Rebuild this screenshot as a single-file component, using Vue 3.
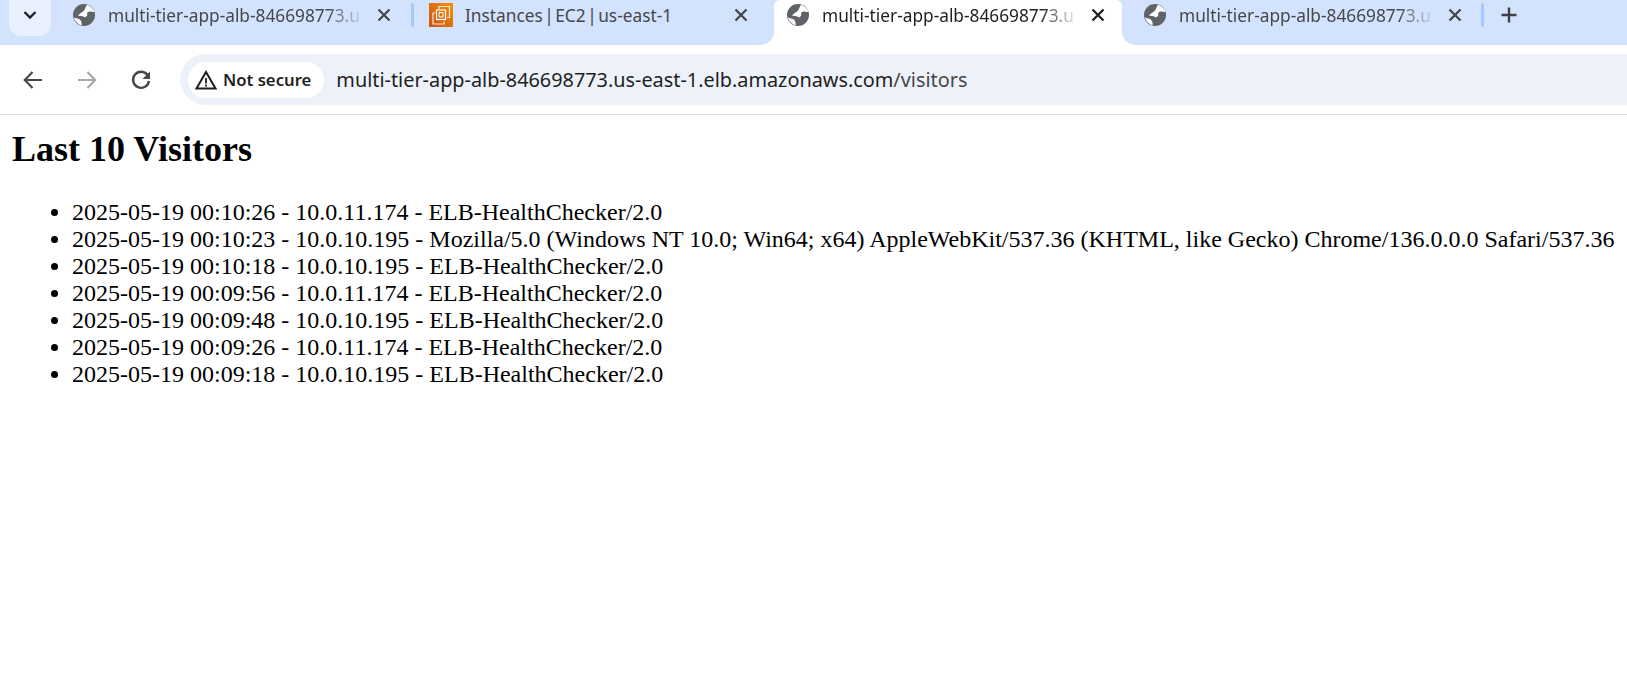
<template>
  <div class="browser">
    <div class="tabstrip">
      <button class="tab-search">
        <svg width="16" height="16" viewBox="0 0 16 16"><path d="M2.500 5 8 10.500 13.500 5" fill="none" stroke="#1f2024" stroke-width="2.400"/></svg>
      </button>
      <div
        v-for="tab in tabs"
        :key="tab.id"
        class="tab"
        :class="{ active: tab.active, divided: tab.divided }"
      >
        <svg v-if="tab.kind === 'ec2'" class="favicon" width="24" height="24" viewBox="0 0 24 24">
          <defs>
            <linearGradient id="ec2-grad" x1="0" y1="1" x2="1" y2="0">
              <stop offset="0" stop-color="#c8511b" />
              <stop offset="1" stop-color="#f59000" />
            </linearGradient>
          </defs>
          <rect width="24" height="24" fill="url(#ec2-grad)" />
          <g fill="none" stroke="#fff" stroke-width="1.200">
            <path d="M10 6V3.500h10.500v11H18" opacity=".85" />
            <path d="M6.500 10H4v11h11v-2.500" opacity=".85" />
            <rect x="7.500" y="7" width="9" height="9.500" />
            <path d="M10 9.500h4v4.500h-4z" stroke-width="1" />
          </g>
        </svg>
        <svg v-else class="favicon" width="24" height="24" viewBox="0 0 24 24">
          <circle cx="12" cy="12" r="11" fill="#5f6368" />
          <path d="M15 1.800C13.200 4.500 13 7 11 8.500 9 10 7 10.500 6 13c3-.5 5 .5 7 1.500 2-1.500 3-2.500 2-4.500 1-2 4-2 7.500-.8C21.500 6 19 3 15 1.800z" fill="#fff" />
          <path d="M1.800 14.500C3 18.500 6 21.300 9.500 22.400 10 19.500 9 17 7 16z" fill="#fff" />
        </svg>
        <span class="tab-title" :class="{ fade: tab.fade }">{{ tab.title }}</span>
        <svg class="tab-close" width="16" height="16" viewBox="0 0 16 16">
          <path d="M2.500 2.500l11 11M13.500 2.500l-11 11" stroke-width="2.300" fill="none" />
        </svg>
      </div>
      <div class="tab-divider"></div>
      <button class="new-tab">
        <svg width="18" height="18" viewBox="0 0 18 18"><path d="M9 1.500v15M1.500 9h15" stroke="#3d3f43" stroke-width="2.400" fill="none" /></svg>
      </button>
    </div>

    <div class="toolbar">
      <button class="nav-btn">
        <svg width="24" height="24" viewBox="0 0 24 24"><path d="M21 12H4M11.500 4 3.800 12l7.700 8" fill="none" stroke="#474747" stroke-width="2.200" /></svg>
      </button>
      <button class="nav-btn">
        <svg width="24" height="24" viewBox="0 0 24 24"><path d="M3 12h17M12.500 4l7.700 8-7.700 8" fill="none" stroke="#a9a9a9" stroke-width="2.200" /></svg>
      </button>
      <button class="nav-btn">
        <svg width="24" height="24" viewBox="0 0 24 24"><path d="M18.500 7a8 8 0 1 0 1.500 6" fill="none" stroke="#474747" stroke-width="2.400" /><path d="M21 3.500v7.500h-7.500z" fill="#474747" /></svg>
      </button>
      <div class="omnibox">
        <div class="security-chip">
          <svg width="22" height="20" viewBox="0 0 22 20"><path d="M11 2 1.500 18.500h19z" fill="none" stroke="#1f1f1f" stroke-width="2" stroke-linejoin="miter" /><path d="M11 8v5.500M11 14.500v2" stroke="#1f1f1f" stroke-width="1.800" /></svg>
          <span>Not secure</span>
        </div>
        <div class="url">multi-tier-app-alb-846698773.us-east-1.elb.amazonaws.com<span class="url-path">/visitors</span></div>
      </div>
    </div>

    <main class="page">
      <h1>Last 10 Visitors</h1>
      <ul>
        <li v-for="visitor in visitors" :key="visitor">{{ visitor }}</li>
      </ul>
    </main>
  </div>
</template>

<script setup>
// titles are cut where the tab strip cuts them
const albTitle = 'multi-tier-app-alb-846698773.u';

const tabs = [
  { id: 1, kind: 'globe', title: albTitle, fade: true },
  { id: 2, kind: 'ec2', title: 'Instances | EC2 | us-east-1', divided: true },
  { id: 3, kind: 'globe', title: albTitle, fade: true, active: true },
  { id: 4, kind: 'globe', title: albTitle, fade: true },
];

const visitors = [
  '2025-05-19 00:10:26 - 10.0.11.174 - ELB-HealthChecker/2.0',
  '2025-05-19 00:10:23 - 10.0.10.195 - Mozilla/5.0 (Windows NT 10.0; Win64; x64) AppleWebKit/537.36 (KHTML, like Gecko) Chrome/136.0.0.0 Safari/537.36',
  '2025-05-19 00:10:18 - 10.0.10.195 - ELB-HealthChecker/2.0',
  '2025-05-19 00:09:56 - 10.0.11.174 - ELB-HealthChecker/2.0',
  '2025-05-19 00:09:48 - 10.0.10.195 - ELB-HealthChecker/2.0',
  '2025-05-19 00:09:26 - 10.0.11.174 - ELB-HealthChecker/2.0',
  '2025-05-19 00:09:18 - 10.0.10.195 - ELB-HealthChecker/2.0',
];
</script>

<style>
html,
body {
  overflow: hidden;
  background: #fff;
}
</style>

<style scoped>
.browser {
  width: 1627px;
  height: 685px;
  overflow: hidden;
  background: #fff;
}

button {
  border: none;
  background: none;
  padding: 0;
  display: flex;
  align-items: center;
  justify-content: center;
}

.tabstrip {
  height: 45px;
  background: #d3e3fd;
  display: flex;
  align-items: flex-start;
  font-family: "Noto Sans", sans-serif;
}

.tab-search {
  width: 42px;
  height: 36px;
  padding-bottom: 7px;
  box-sizing: border-box;
  margin-left: 9px;
  background: #e9f0fe;
  border-radius: 0 0 12px 12px;
  flex-shrink: 0;
}

.tab {
  width: 357px;
  height: 45px;
  padding-left: 21px;
  box-sizing: border-box;
  flex-shrink: 0;
  display: flex;
  align-items: flex-start;
  position: relative;
  color: #45474b;
}

.tab.divided::before {
  content: "";
  position: absolute;
  left: 3px;
  top: 3px;
  width: 3px;
  height: 24px;
  border-radius: 2px;
  background: #a8c7fa;
}

.tab.active {
  width: 348px;
  margin-left: 9px;
  padding-left: 12px;
  background: #fff;
  color: #1f1f1f;
  border-radius: 6px 6px 0 0;
}

/* flares that join the active tab to the toolbar */
.tab.active::before,
.tab.active::after {
  content: "";
  position: absolute;
  bottom: 0;
  width: 13px;
  height: 13px;
}

.tab.active::before {
  left: -13px;
  background: radial-gradient(circle at 0 0, #d3e3fd 12.500px, #fff 13px);
}

.tab.active::after {
  right: -13px;
  background: radial-gradient(circle at 100% 0, #d3e3fd 12.500px, #fff 13px);
}

.favicon {
  margin-top: 3px;
  flex-shrink: 0;
}

.tab-title {
  margin-left: 12px;
  width: 251px;
  flex-shrink: 0;
  font-size: 17.300px;
  word-spacing: -3px;
  line-height: 32px;
  white-space: nowrap;
}

.tab-title.fade {
  -webkit-mask-image: linear-gradient(to right, #000 87%, rgba(0, 0, 0, 0.15) 100%);
  mask-image: linear-gradient(to right, #000 87%, rgba(0, 0, 0, 0.15) 100%);
}

.tab-close {
  margin-left: 17px;
  margin-top: 7px;
  flex-shrink: 0;
  stroke: #45474b;
}

.tab.active .tab-close {
  stroke: #1f1f1f;
}

.tab-divider {
  width: 3px;
  height: 24px;
  margin-top: 3px;
  margin-left: 2px;
  border-radius: 2px;
  background: #a8c7fa;
  flex-shrink: 0;
}

.new-tab {
  width: 18px;
  height: 18px;
  margin-left: 16px;
  margin-top: 6px;
}

.toolbar {
  height: 70px;
  background: #fff;
  border-top-left-radius: 10px;
  border-bottom: 1px solid #dcdcdc;
  box-sizing: border-box;
  display: flex;
  align-items: center;
  padding-left: 21px;
  font-family: "Noto Sans", sans-serif;
}

.nav-btn {
  width: 24px;
  height: 24px;
  margin-right: 30px;
  flex-shrink: 0;
}

.omnibox {
  flex: 1;
  height: 51px;
  background: #edf2fa;
  border-radius: 26px 0 0 26px;
  display: flex;
  align-items: center;
  padding-left: 8px;
  margin-left: -3px;
}

.security-chip {
  height: 36px;
  padding: 0 13px 0 7px;
  background: #fff;
  border-radius: 18px;
  display: flex;
  align-items: center;
  gap: 6px;
  font-size: 16.700px;
  font-weight: 600;
  color: #1f1f1f;
}

.url {
  margin-left: 12px;
  font-size: 19.850px;
  color: #1f1f1f;
  white-space: nowrap;
}

.url-path {
  color: #474747;
}

.page {
  padding: 14px 12px 12px;
  font-family: "Liberation Serif", serif;
  font-size: 24px;
  color: #000;
}

h1 {
  margin: 0;
  font-size: 36px;
  font-weight: 700;
  line-height: 41px;
}

ul {
  margin: 29px 0 0;
  padding: 0 0 0 60px;
  line-height: 27px;
  white-space: nowrap;
}
</style>
